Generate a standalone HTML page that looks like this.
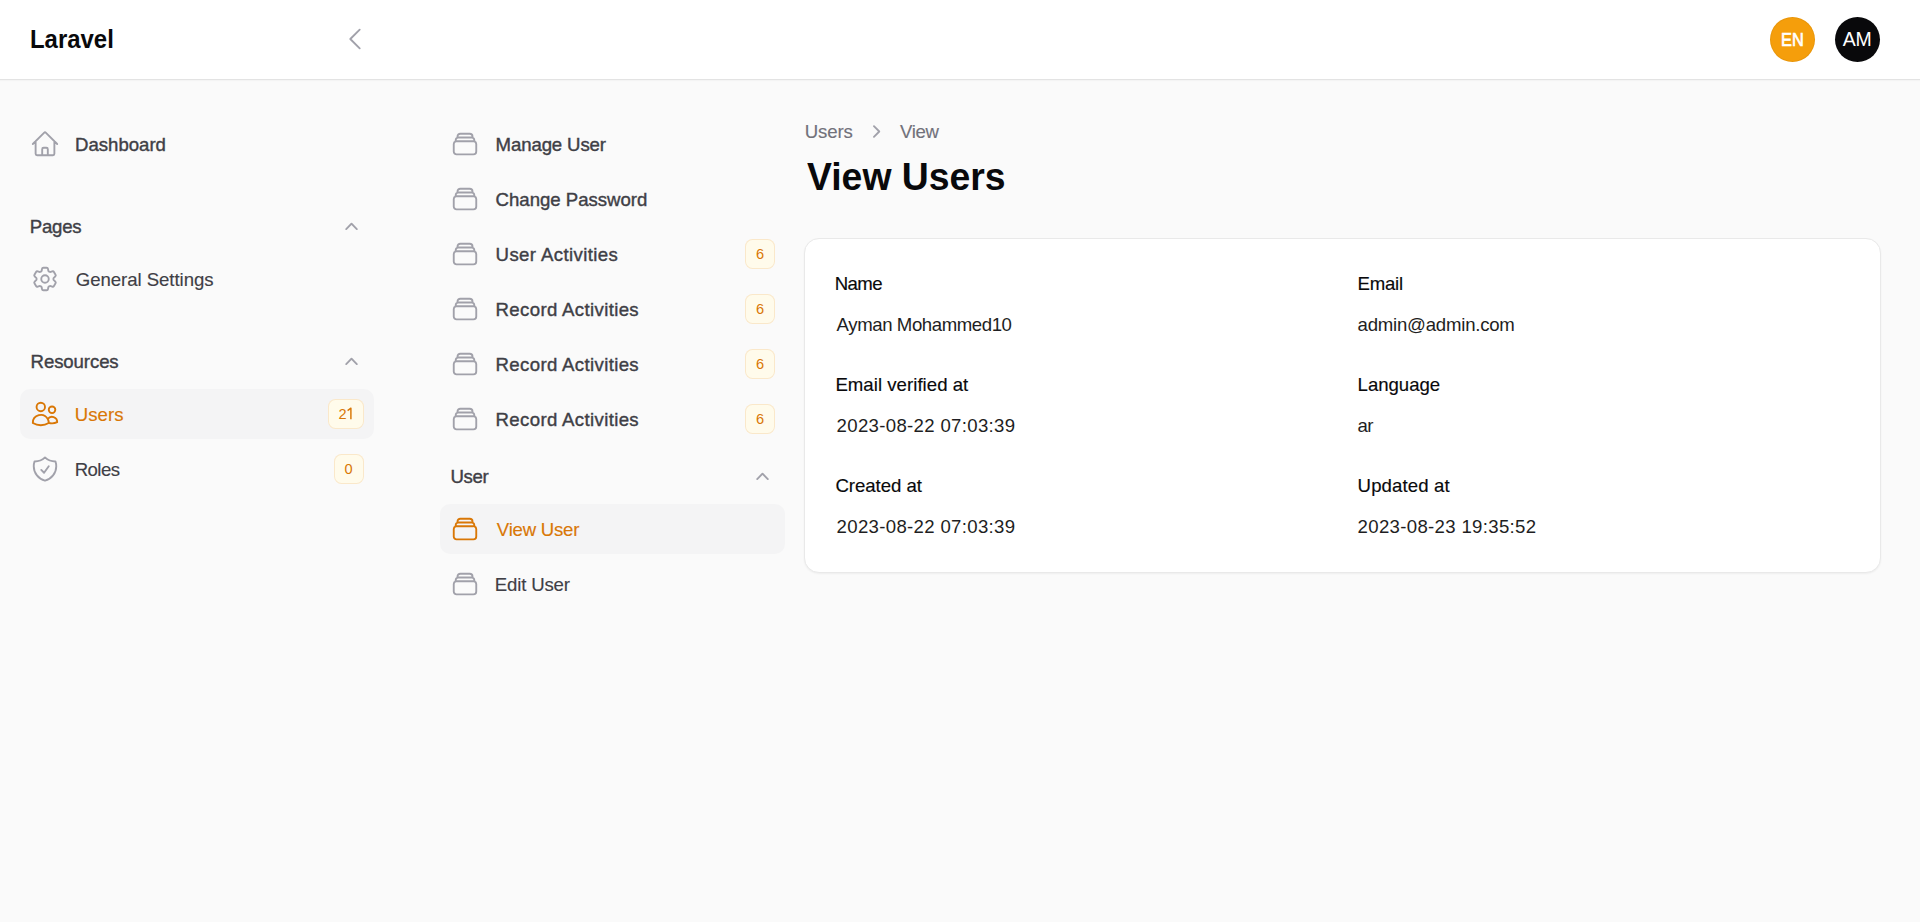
<!DOCTYPE html>
<html>
<head>
<meta charset="utf-8">
<style>
*{margin:0;padding:0;box-sizing:border-box}
html,body{width:1920px;height:922px;overflow:hidden;background:#fafafa;font-family:"Liberation Sans",sans-serif}
.t{position:absolute;line-height:1;white-space:nowrap;font-family:"Liberation Sans",sans-serif}
.sm{font-size:18.6px}
.semi{-webkit-text-stroke:0.4px currentColor}
.med{-webkit-text-stroke:0.15px currentColor}
.g7{color:#3f3f46}
.g9{color:#09090b}
.gv{color:#1e1e22}
.pri{color:#d97706}
.ico{position:absolute;width:30px;height:30px;fill:none;stroke:#a1a1aa;stroke-width:1.5;stroke-linecap:round;stroke-linejoin:round}
.ico.act{stroke:#d97706}
.chev{position:absolute;width:25px;height:25px;fill:#a1a1aa}
.bg{position:absolute;background:#f4f4f5;border-radius:10px}
.badge{position:absolute;height:30px;border-radius:7.5px;background:#fffbeb;box-shadow:inset 0 0 0 1px rgba(217,119,6,0.14)}
.bt{font-size:14.6px;color:#d97706}
#hdr{position:absolute;left:0;top:0;width:1920px;height:80px;background:#fff;border-bottom:1px solid #e3e3e3;box-shadow:0 1px 1px rgba(0,0,0,0.025)}
#card{position:absolute;left:804px;top:238px;width:1077px;height:335px;background:#fff;border-radius:15px;border:1px solid #e9e9e9;box-shadow:0 1px 2px rgba(0,0,0,0.05)}
.av{position:absolute;top:17px;width:45px;height:45px;border-radius:50%}
</style>
</head>
<body>
<div id="hdr"></div>
<div class="t g9" id="brand" style="font-size:26px;font-weight:700;left:30.00px;top:26.00px;transform-origin:0 0;transform:scaleX(0.92)">Laravel</div>
<svg class="ico" style="left:340px;top:24px" viewBox="0 0 24 24"><path d="M15.75 19.5 8.25 12l7.5-7.5"/></svg>
<div class="av" style="left:1770px;background:#f59e0b;box-shadow:inset 0 0 0 1px rgba(0,0,0,0.05)"></div>
<div class="t" id="en" style="font-size:18.6px;font-weight:400;-webkit-text-stroke:0.7px #fff;color:#fff;left:1781.2px;top:31px;transform-origin:0 0;transform:scaleX(0.88)">EN</div>
<div class="av" style="left:1835px;background:#09090b"></div>
<div class="t" id="am" style="font-size:19.5px;color:#fff;left:1842.8px;top:30px;letter-spacing:-0.3px">AM</div>

<!-- SIDEBAR -->
<svg class="ico" style="left:30px;top:129px" viewBox="0 0 24 24"><path d="m2.25 12 8.954-8.955c.44-.439 1.152-.439 1.591 0L21.75 12M4.5 9.75v10.125c0 .621.504 1.125 1.125 1.125H9.75v-4.875c0-.621.504-1.125 1.125-1.125h2.25c.621 0 1.125.504 1.125 1.125V21h4.125c.621 0 1.125-.504 1.125-1.125V9.75M8.25 21h8.25"/></svg>
<div class="t sm semi g7" id="dash" style="left:75.00px;top:135.80px">Dashboard</div>

<div class="t sm semi g7" id="pages" style="left:29.80px;top:218.10px;letter-spacing:-0.250px">Pages</div>
<svg class="chev" style="left:339px;top:215px" viewBox="0 0 20 20"><path fill-rule="evenodd" d="M9.47 6.47a.75.75 0 0 1 1.06 0l4.25 4.25a.75.75 0 1 1-1.06 1.06L10 8.06l-3.72 3.72a.75.75 0 0 1-1.06-1.06l4.25-4.25Z"/></svg>
<svg class="ico" style="left:30px;top:264px" viewBox="0 0 24 24"><path d="M9.594 3.94c.09-.542.56-.94 1.11-.94h2.593c.55 0 1.02.398 1.11.94l.213 1.281c.063.374.313.686.645.87.074.04.147.083.22.127.325.196.72.257 1.075.124l1.217-.456a1.125 1.125 0 0 1 1.37.49l1.296 2.247a1.125 1.125 0 0 1-.26 1.431l-1.003.827c-.293.241-.438.613-.43.992a7.723 7.723 0 0 1 0 .255c-.008.378.137.75.43.991l1.004.827c.424.35.534.955.26 1.43l-1.298 2.247a1.125 1.125 0 0 1-1.369.491l-1.217-.456c-.355-.133-.75-.072-1.076.124a6.47 6.470 0 0 1-.22.128c-.331.183-.581.495-.644.869l-.213 1.281c-.09.543-.56.94-1.11.94h-2.594c-.55 0-1.019-.398-1.11-.94l-.213-1.281c-.062-.374-.312-.686-.644-.87a6.52 6.52 0 0 1-.22-.127c-.325-.196-.72-.257-1.076-.124l-1.217.456a1.125 1.125 0 0 1-1.369-.49l-1.297-2.247a1.125 1.125 0 0 1 .26-1.431l1.004-.827c.292-.24.437-.613.43-.991a6.932 6.932 0 0 1 0-.255c.007-.38-.138-.751-.43-.992l-1.004-.827a1.125 1.125 0 0 1-.26-1.43l1.297-2.247a1.125 1.125 0 0 1 1.37-.491l1.216.456c.356.133.751.072 1.076-.124.072-.044.146-.086.22-.128.332-.183.582-.495.644-.869l.214-1.28Z"/><path d="M15 12a3 3 0 1 1-6 0 3 3 0 0 1 6 0Z"/></svg>
<div class="t sm med g7" id="gs" style="left:75.80px;top:271.00px;letter-spacing:-0.053px">General Settings</div>

<div class="t sm semi g7" id="res" style="left:30.60px;top:353.30px;letter-spacing:-0.100px">Resources</div>
<svg class="chev" style="left:339px;top:350px" viewBox="0 0 20 20"><path fill-rule="evenodd" d="M9.47 6.47a.75.75 0 0 1 1.06 0l4.25 4.25a.75.75 0 1 1-1.06 1.06L10 8.06l-3.72 3.72a.75.75 0 0 1-1.06-1.06l4.25-4.25Z"/></svg>

<div class="bg" style="left:20px;top:389px;width:354px;height:50px"></div>
<svg class="ico act" style="left:30px;top:399px" viewBox="0 0 24 24"><path d="M15 19.128a9.38 9.38 0 0 0 2.625.372 9.337 9.337 0 0 0 4.121-.952 4.125 4.125 0 0 0-7.533-2.493M15 19.128v-.003c0-1.113-.285-2.16-.786-3.07M15 19.128v.106A12.318 12.318 0 0 1 8.624 21c-2.331 0-4.512-.645-6.374-1.766l-.001-.109a6.375 6.375 0 0 1 11.964-3.07M12 6.375a3.375 3.375 0 1 1-6.75 0 3.375 3.375 0 0 1 6.75 0Zm8.25 2.25a2.625 2.625 0 1 1-5.25 0 2.625 2.625 0 0 1 5.25 0Z"/></svg>
<div class="t sm med pri" id="users" style="left:74.80px;top:405.60px;letter-spacing:0.050px">Users</div>
<div class="badge" style="left:328px;top:399px;width:36px"></div>
<div class="t bt" id="b21" style="left:338.60px;top:407.20px">2</div>
<svg style="position:absolute;left:345px;top:406px;width:10px;height:15px" viewBox="0 0 10 15"><path d="M2.6 4.6 L5.9 2.2 V13.2" fill="none" stroke="#d97706" stroke-width="1.45" stroke-linejoin="round"/></svg>

<svg class="ico" style="left:30px;top:454px" viewBox="0 0 24 24"><path d="M9 12.75 11.25 15 15 9.75m-3-7.036A11.959 11.959 0 0 1 3.598 6 11.99 11.99 0 0 0 3 9.749c0 5.592 3.824 10.29 9 11.623 5.176-1.332 9-6.03 9-11.622 0-1.31-.21-2.571-.598-3.751h-.152c-3.196 0-6.1-1.248-8.25-3.285Z"/></svg>
<div class="t sm med g7" id="roles" style="left:74.80px;top:460.90px;letter-spacing:-0.600px">Roles</div>
<div class="badge" style="left:334px;top:454px;width:30px"></div>
<div class="t bt" id="b0" style="left:344.40px;top:462.20px">0</div>

<!-- SUBNAV -->
<svg class="ico" style="left:450px;top:129px" viewBox="0 0 24 24"><path d="M6 6.878V6a2.25 2.25 0 0 1 2.25-2.25h7.5A2.25 2.25 0 0 1 18 6v.878m-12 0c.235-.083.487-.128.75-.128h10.5c.263 0 .515.045.75.128m-12 0A2.25 2.25 0 0 0 4.5 9v.878m13.5-3A2.25 2.25 0 0 1 19.5 9v.878m0 0a2.246 2.246 0 0 0-.75-.128H5.25c-.263 0-.515.045-.75.128m15 0A2.25 2.25 0 0 1 21 12v6a2.25 2.25 0 0 1-2.25 2.25H5.25A2.25 2.25 0 0 1 3 18v-6c0-.98.626-1.813 1.5-2.122"/></svg>
<div class="t sm semi g7" id="sn1" style="left:495.60px;top:136.10px;letter-spacing:-0.120px">Manage User</div>
<svg class="ico" style="left:450px;top:184px" viewBox="0 0 24 24"><path d="M6 6.878V6a2.25 2.25 0 0 1 2.25-2.25h7.5A2.25 2.25 0 0 1 18 6v.878m-12 0c.235-.083.487-.128.75-.128h10.5c.263 0 .515.045.75.128m-12 0A2.25 2.25 0 0 0 4.5 9v.878m13.5-3A2.25 2.25 0 0 1 19.5 9v.878m0 0a2.246 2.246 0 0 0-.75-.128H5.25c-.263 0-.515.045-.75.128m15 0A2.25 2.25 0 0 1 21 12v6a2.25 2.25 0 0 1-2.25 2.25H5.25A2.25 2.25 0 0 1 3 18v-6c0-.98.626-1.813 1.5-2.122"/></svg>
<div class="t sm semi g7" id="sn2" style="left:495.60px;top:191.30px;letter-spacing:-0.014px">Change Password</div>
<svg class="ico" style="left:450px;top:239px" viewBox="0 0 24 24"><path d="M6 6.878V6a2.25 2.25 0 0 1 2.25-2.25h7.5A2.25 2.25 0 0 1 18 6v.878m-12 0c.235-.083.487-.128.75-.128h10.5c.263 0 .515.045.75.128m-12 0A2.25 2.25 0 0 0 4.5 9v.878m13.5-3A2.25 2.25 0 0 1 19.5 9v.878m0 0a2.246 2.246 0 0 0-.75-.128H5.25c-.263 0-.515.045-.75.128m15 0A2.25 2.25 0 0 1 21 12v6a2.25 2.25 0 0 1-2.25 2.25H5.25A2.25 2.25 0 0 1 3 18v-6c0-.98.626-1.813 1.5-2.122"/></svg>
<div class="t sm semi g7" id="sn3" style="left:495.60px;top:245.70px;letter-spacing:0.385px">User Activities</div>
<div class="badge" style="left:745px;top:239px;width:30px"></div>
<div class="t bt" id="sn3b" style="left:756.00px;top:247.20px">6</div>
<svg class="ico" style="left:450px;top:294px" viewBox="0 0 24 24"><path d="M6 6.878V6a2.25 2.25 0 0 1 2.25-2.25h7.5A2.25 2.25 0 0 1 18 6v.878m-12 0c.235-.083.487-.128.75-.128h10.5c.263 0 .515.045.75.128m-12 0A2.25 2.25 0 0 0 4.5 9v.878m13.5-3A2.25 2.25 0 0 1 19.5 9v.878m0 0a2.246 2.246 0 0 0-.75-.128H5.25c-.263 0-.515.045-.75.128m15 0A2.25 2.25 0 0 1 21 12v6a2.25 2.25 0 0 1-2.25 2.25H5.25A2.25 2.25 0 0 1 3 18v-6c0-.98.626-1.813 1.5-2.122"/></svg>
<div class="t sm semi g7" id="sn4" style="left:495.60px;top:301.10px;letter-spacing:0.349px">Record Activities</div>
<div class="badge" style="left:745px;top:294px;width:30px"></div>
<div class="t bt" id="sn4b" style="left:756.00px;top:302.20px">6</div>
<svg class="ico" style="left:450px;top:349px" viewBox="0 0 24 24"><path d="M6 6.878V6a2.25 2.25 0 0 1 2.25-2.25h7.5A2.25 2.25 0 0 1 18 6v.878m-12 0c.235-.083.487-.128.75-.128h10.5c.263 0 .515.045.75.128m-12 0A2.25 2.25 0 0 0 4.5 9v.878m13.5-3A2.25 2.25 0 0 1 19.5 9v.878m0 0a2.246 2.246 0 0 0-.75-.128H5.25c-.263 0-.515.045-.75.128m15 0A2.25 2.25 0 0 1 21 12v6a2.25 2.25 0 0 1-2.25 2.25H5.25A2.25 2.25 0 0 1 3 18v-6c0-.98.626-1.813 1.5-2.122"/></svg>
<div class="t sm semi g7" id="sn5" style="left:495.60px;top:356.20px;letter-spacing:0.349px">Record Activities</div>
<div class="badge" style="left:745px;top:349px;width:30px"></div>
<div class="t bt" id="sn5b" style="left:756.00px;top:357.20px">6</div>
<svg class="ico" style="left:450px;top:404px" viewBox="0 0 24 24"><path d="M6 6.878V6a2.25 2.25 0 0 1 2.25-2.25h7.5A2.25 2.25 0 0 1 18 6v.878m-12 0c.235-.083.487-.128.75-.128h10.5c.263 0 .515.045.75.128m-12 0A2.25 2.25 0 0 0 4.5 9v.878m13.5-3A2.25 2.25 0 0 1 19.5 9v.878m0 0a2.246 2.246 0 0 0-.75-.128H5.25c-.263 0-.515.045-.75.128m15 0A2.25 2.25 0 0 1 21 12v6a2.25 2.25 0 0 1-2.25 2.25H5.25A2.25 2.25 0 0 1 3 18v-6c0-.98.626-1.813 1.5-2.122"/></svg>
<div class="t sm semi g7" id="sn6" style="left:495.60px;top:411.30px;letter-spacing:0.349px">Record Activities</div>
<div class="badge" style="left:745px;top:404px;width:30px"></div>
<div class="t bt" id="sn6b" style="left:756.00px;top:412.20px">6</div>
<div class="t sm semi g7" id="grpuser" style="left:450.60px;top:468.10px;letter-spacing:-0.400px">User</div>
<svg class="chev" style="left:750px;top:465px" viewBox="0 0 20 20"><path fill-rule="evenodd" d="M9.47 6.47a.75.75 0 0 1 1.06 0l4.25 4.25a.75.75 0 1 1-1.06 1.06L10 8.06l-3.72 3.72a.75.75 0 0 1-1.06-1.06l4.25-4.25Z"/></svg>
<div class="bg" style="left:440px;top:504px;width:345px;height:50px"></div>
<svg class="ico act" style="left:450px;top:514px" viewBox="0 0 24 24"><path d="M6 6.878V6a2.25 2.25 0 0 1 2.25-2.25h7.5A2.25 2.25 0 0 1 18 6v.878m-12 0c.235-.083.487-.128.75-.128h10.5c.263 0 .515.045.75.128m-12 0A2.25 2.25 0 0 0 4.5 9v.878m13.5-3A2.25 2.25 0 0 1 19.5 9v.878m0 0a2.246 2.246 0 0 0-.75-.128H5.25c-.263 0-.515.045-.75.128m15 0A2.25 2.25 0 0 1 21 12v6a2.25 2.25 0 0 1-2.25 2.25H5.25A2.25 2.25 0 0 1 3 18v-6c0-.98.626-1.813 1.5-2.122"/></svg>
<div class="t sm med pri" id="vu" style="left:496.80px;top:520.80px;letter-spacing:-0.224px">View User</div>
<svg class="ico" style="left:450px;top:569px" viewBox="0 0 24 24"><path d="M6 6.878V6a2.25 2.25 0 0 1 2.25-2.25h7.5A2.25 2.25 0 0 1 18 6v.878m-12 0c.235-.083.487-.128.75-.128h10.5c.263 0 .515.045.75.128m-12 0A2.25 2.25 0 0 0 4.5 9v.878m13.5-3A2.25 2.25 0 0 1 19.5 9v.878m0 0a2.246 2.246 0 0 0-.75-.128H5.25c-.263 0-.515.045-.75.128m15 0A2.25 2.25 0 0 1 21 12v6a2.25 2.25 0 0 1-2.25 2.25H5.25A2.25 2.25 0 0 1 3 18v-6c0-.98.626-1.813 1.5-2.122"/></svg>
<div class="t sm med g7" id="eu" style="left:494.80px;top:576.00px;letter-spacing:-0.175px">Edit User</div>

<!-- MAIN -->
<div class="t sm med" id="bc1" style="color:#71717a;left:804.80px;top:122.70px;letter-spacing:-0.125px">Users</div>
<svg class="chev" style="left:863px;top:119px" viewBox="0 0 20 20"><path fill-rule="evenodd" d="M8.22 5.22a.75.75 0 0 1 1.06 0l4.25 4.25a.75.75 0 0 1 0 1.06l-4.25 4.25a.75.75 0 0 1-1.06-1.06L11.94 10 8.22 6.28a.75.75 0 0 1 0-1.06Z"/></svg>
<div class="t sm med" id="bc2" style="color:#71717a;left:900.00px;top:122.70px;letter-spacing:-0.333px">View</div>
<div class="t g9" id="title" style="font-size:39.4px;font-weight:700;left:806.50px;top:156.60px;transform-origin:0 0;transform:scaleX(0.948)">View Users</div>

<div id="card"></div>
<div class="t sm med g9" id="l0a" style="left:834.80px;top:275.00px;letter-spacing:-0.600px">Name</div>
<div class="t sm gv" id="v0a" style="left:836.60px;top:315.90px;letter-spacing:-0.413px">Ayman Mohammed10</div>
<div class="t sm med g9" id="l0b" style="left:1357.60px;top:275.00px;letter-spacing:-0.250px">Email</div>
<div class="t sm gv" id="v0b" style="left:1357.60px;top:315.90px;letter-spacing:-0.228px">admin@admin.com</div>
<div class="t sm med g9" id="l1a" style="left:835.40px;top:375.80px;letter-spacing:0.038px">Email verified at</div>
<div class="t sm gv" id="v1a" style="left:836.60px;top:417.00px;letter-spacing:0.323px">2023-08-22 07:03:39</div>
<div class="t sm med g9" id="l1b" style="left:1357.60px;top:375.80px;letter-spacing:-0.028px">Language</div>
<div class="t sm gv" id="v1b" style="left:1357.60px;top:417.00px;letter-spacing:-0.800px">ar</div>
<div class="t sm med g9" id="l2a" style="left:835.40px;top:476.90px;letter-spacing:-0.022px">Created at</div>
<div class="t sm gv" id="v2a" style="left:836.60px;top:517.90px;letter-spacing:0.323px">2023-08-22 07:03:39</div>
<div class="t sm med g9" id="l2b" style="left:1357.60px;top:476.90px;letter-spacing:0.111px">Updated at</div>
<div class="t sm gv" id="v2b" style="left:1357.60px;top:517.90px;letter-spacing:0.323px">2023-08-23 19:35:52</div>
</body>
</html>
